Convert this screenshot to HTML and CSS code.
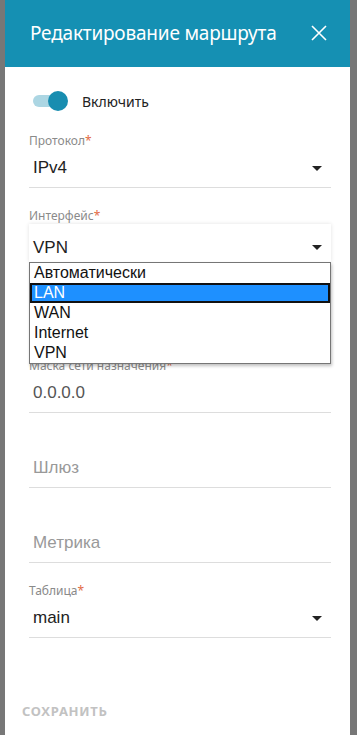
FILE: index.html
```html
<!DOCTYPE html>
<html lang="ru">
	<head>
		<meta charset="utf-8">
		<title>Редактирование маршрута</title>
		<link rel="stylesheet" href="styles.css">
	</head>
	<body>
		<div class="page">
			<div class="dialog">
				<div class="dialog-header">
					<span class="dialog-title">Редактирование маршрута</span>
					<svg class="close" width="16" height="16" viewBox="0 0 16 16">
						<path d="M1 1 L15 15 M15 1 L1 15" stroke="#fff" stroke-width="1.6" fill="none"/>
					</svg>
				</div>
				<div class="dialog-body">
					<div class="toggle-row">
						<span class="toggle"><span class="toggle-knob"></span></span>
						<span class="toggle-label">Включить</span>
					</div>

					<div class="field">
						<div class="label">Протокол<span class="req">*</span></div>
						<div class="value select">IPv4<span class="arrow"></span></div>
					</div>

					<div class="field field-open">
						<div class="label">Интерфейс<span class="req">*</span></div>
						<div class="value select focused">VPN<span class="arrow"></span></div>
						<ul class="dropdown">
							<li>Автоматически</li>
							<li class="active">LAN</li>
							<li>WAN</li>
							<li>Internet</li>
							<li>VPN</li>
						</ul>
					</div>

					<div class="field">
						<div class="label">Сеть назначения<span class="req">*</span></div>
						<div class="value dim">0.0.0.0</div>
					</div>

					<div class="field">
						<div class="label">Маска сети назначения<span class="req">*</span></div>
						<div class="value dim">0.0.0.0</div>
					</div>

					<div class="field">
						<div class="label"></div>
						<div class="value placeholder">Шлюз</div>
					</div>

					<div class="field">
						<div class="label"></div>
						<div class="value placeholder">Метрика</div>
					</div>

					<div class="field">
						<div class="label">Таблица<span class="req">*</span></div>
						<div class="value select">main<span class="arrow"></span></div>
					</div>

					<div class="actions">
						<span class="save">Сохранить</span>
					</div>
				</div>
			</div>
		</div>
	</body>
</html>
```

FILE: styles.css
```css
body {
	margin: 0;
	background-color: #777;
	font-family: "Noto Sans", Arial, sans-serif;
}
.page {
	display: flex;
	padding: 0 7px 0 5px;
	min-height: 735px;
}
.dialog {
	flex: 1;
	background: #fff;
	min-height: 733px;
}
.dialog-header {
	height: 67px;
	background-color: #1590b3;
	display: flex;
	align-items: center;
	justify-content: space-between;
	padding: 0 23px 0 25px;
}
.dialog-title {
	color: #fff;
	font-size: 19px;
	letter-spacing: -0.2px;
	margin-top: -1px;
}
.close {
	margin-top: -1px;
}
.dialog-body {
	padding: 22px 19px 0 24px;
}
.toggle-row {
	display: flex;
	align-items: center;
	height: 24px;
}
.toggle {
	position: relative;
	width: 32px;
	height: 12px;
	margin-left: 4px;
	border-radius: 6px;
	background-color: #acd6e3;
}
.toggle-knob {
	position: absolute;
	right: -3px;
	top: -4px;
	width: 20px;
	height: 20px;
	border-radius: 50%;
	background-color: #188db0;
}
.toggle-label {
	margin-left: 17px;
	font-size: 14px;
	color: #222;
}
.field {
	position: relative;
	height: 75px;
	box-sizing: border-box;
	padding-top: 21px;
	border-bottom: 1px solid #ddd;
}
.label {
	height: 14px;
	line-height: 14px;
	font-size: 12px;
	color: #8a8a8a;
}
.req {
	color: #e36b45;
}
.value {
	margin-top: 10px;
	height: 20px;
	line-height: 20px;
	padding-left: 4px;
	font-family: "Liberation Sans", Arial, sans-serif;
	font-size: 17px;
	color: #222;
}
.select {
	display: flex;
	justify-content: space-between;
	align-items: center;
}
.arrow {
	width: 0;
	height: 0;
	margin-right: 9px;
	border-left: 5px solid transparent;
	border-right: 5px solid transparent;
	border-top: 5px solid #222;
}
.focused {
	margin-top: 1px;
	height: 29px;
	padding-top: 9px;
	padding-bottom: 0;
	box-shadow: 0 0 4px rgba(0, 0, 0, 0.12);
	align-items: center;
}
.dim {
	color: #555;
}
.placeholder {
	color: #999;
}
.dropdown {
	position: absolute;
	left: 0;
	right: 0;
	top: 74px;
	margin: 0;
	padding: 0;
	list-style: none;
	background: #fff;
	border: 1px solid #767676;
	box-shadow: 1px 2px 3px rgba(0, 0, 0, 0.25);
	font-family: "Liberation Sans", Arial, sans-serif;
	font-size: 16px;
	color: #111;
	z-index: 2;
}
.dropdown li {
	height: 20px;
	line-height: 20px;
	padding-left: 4px;
}
.dropdown li.active {
	background-color: #1e90ff;
	color: #fff;
	box-sizing: border-box;
	border: 2px solid #111;
	padding-left: 2px;
	line-height: 16px;
}
.actions {
	padding-top: 61px;
	margin-left: -7px;
}
.save {
	text-transform: uppercase;
	font-size: 13px;
	font-weight: bold;
	letter-spacing: 0.7px;
	color: #c2c2c2;
}
```
